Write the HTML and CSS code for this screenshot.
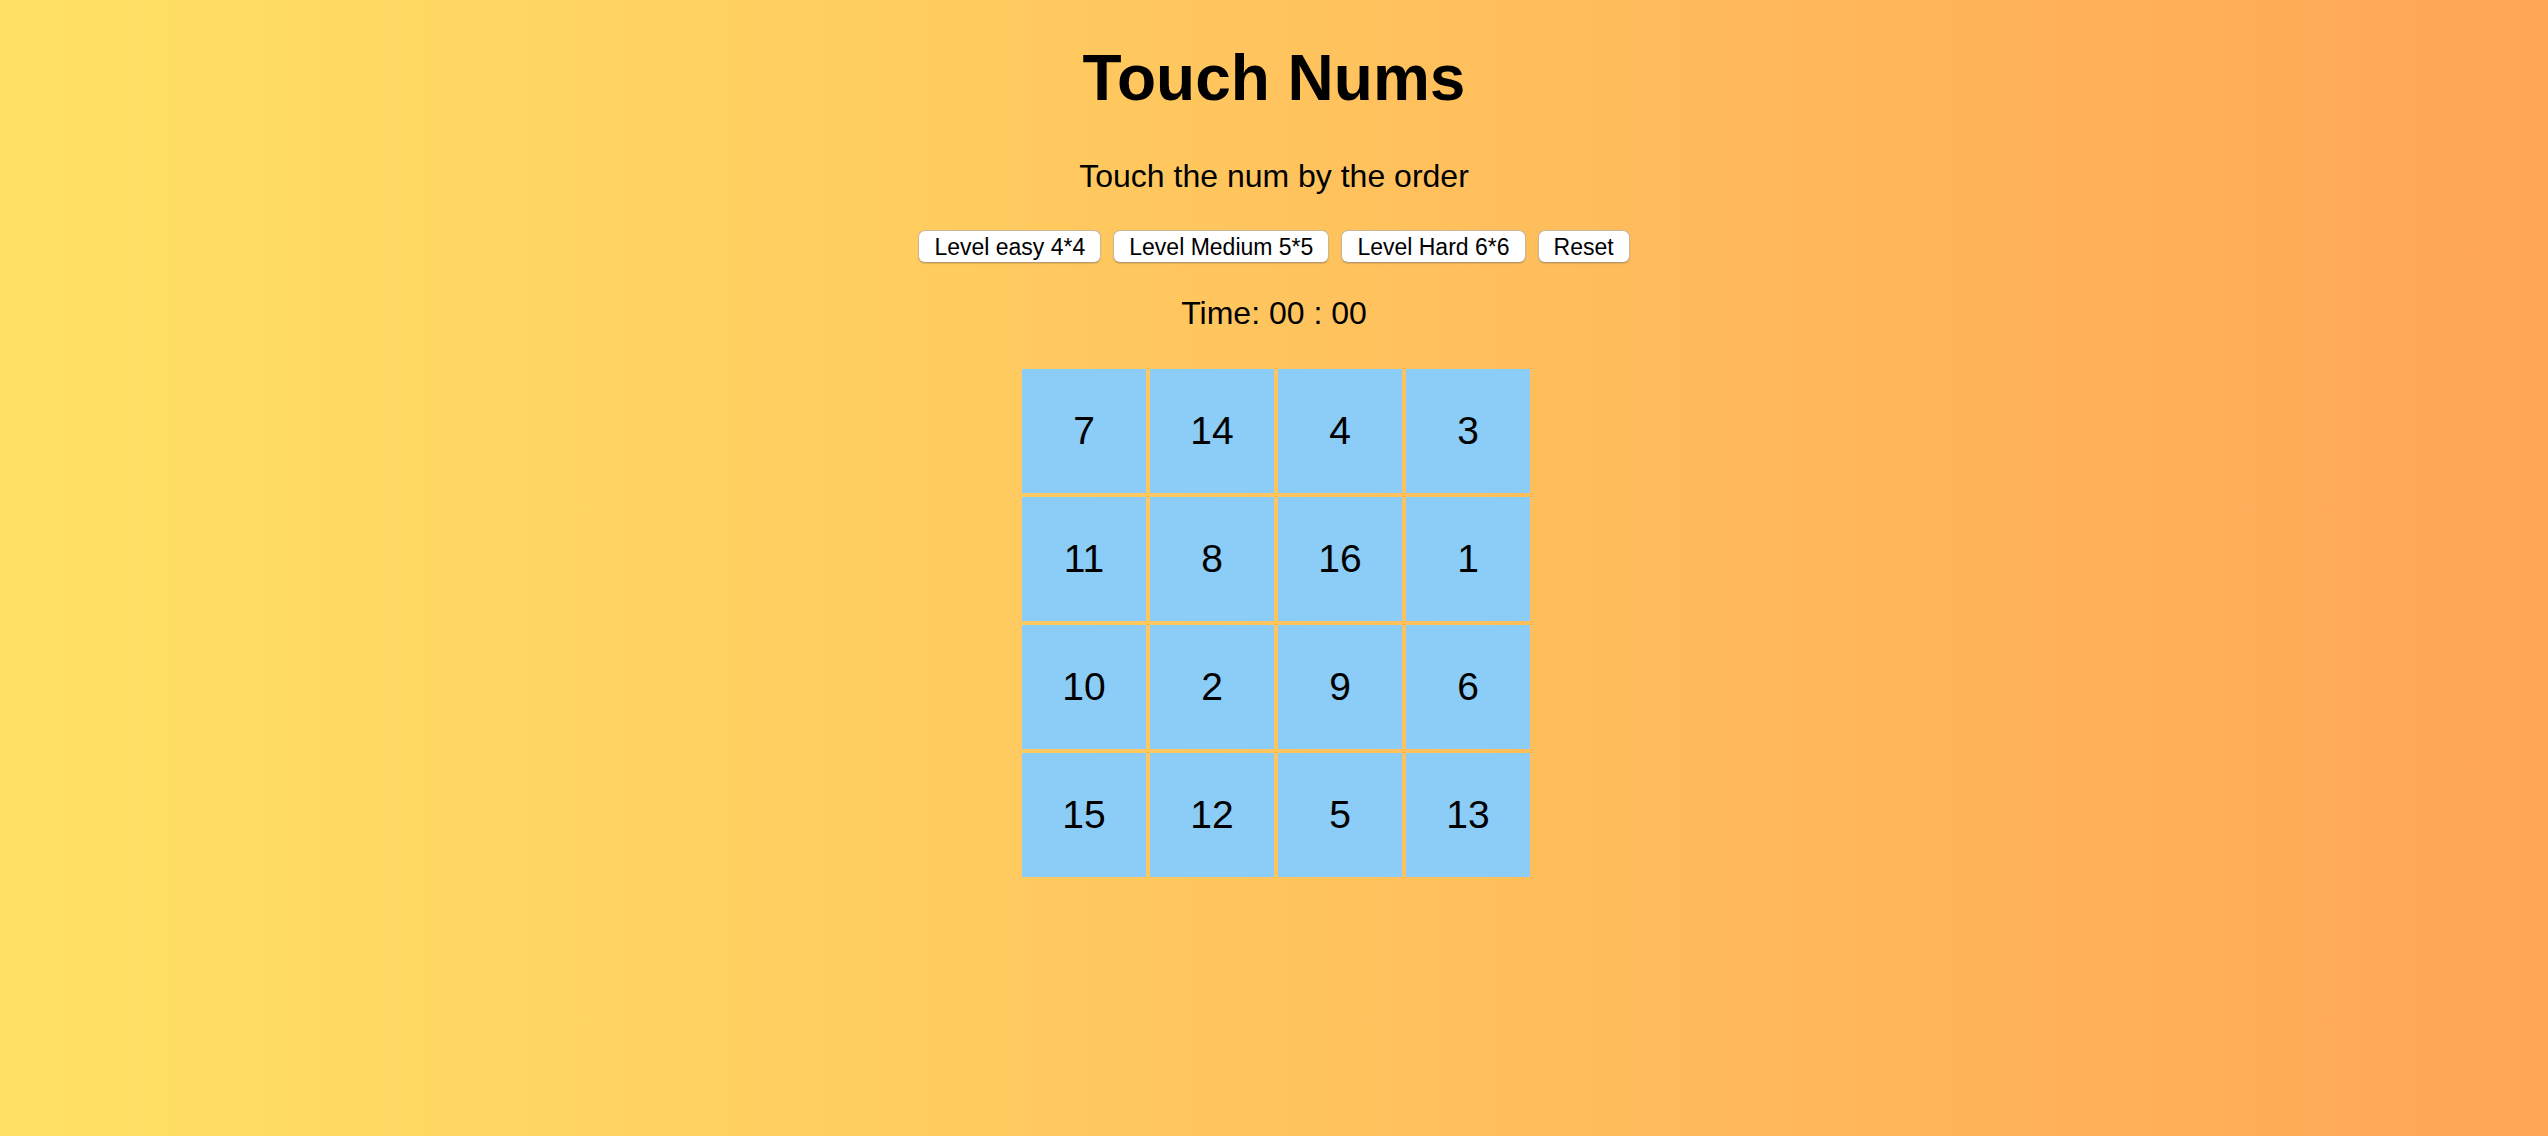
FILE: index.html
```html
<!DOCTYPE html>
<html lang="en">
<head>
<meta charset="utf-8">
<title>Touch Nums</title>
<link rel="stylesheet" href="styles.css">
</head>
<body>
<main class="app">
  <h1 class="title">Touch Nums</h1>
  <p class="subtitle">Touch the num by the order</p>
  <div class="controls">
    <button class="btn">Level easy 4*4</button>
    <button class="btn">Level Medium 5*5</button>
    <button class="btn">Level Hard 6*6</button>
    <button class="btn">Reset</button>
  </div>
  <p class="timer">Time: 00 : 00</p>
  <div class="board">
    <div class="cell">7</div>
    <div class="cell">14</div>
    <div class="cell">4</div>
    <div class="cell">3</div>
    <div class="cell">11</div>
    <div class="cell">8</div>
    <div class="cell">16</div>
    <div class="cell">1</div>
    <div class="cell">10</div>
    <div class="cell">2</div>
    <div class="cell">9</div>
    <div class="cell">6</div>
    <div class="cell">15</div>
    <div class="cell">12</div>
    <div class="cell">5</div>
    <div class="cell">13</div>
  </div>
</main>
</body>
</html>
```
FILE: styles.css
```css
html, body {
  margin: 0;
  padding: 0;
  height: 100%;
}
body {
  background: linear-gradient(to right, #ffe265, #ffa656);
  font-family: "Liberation Sans", Arial, sans-serif;
  color: #000;
}
.app {
  display: flex;
  flex-direction: column;
  align-items: center;
  padding-top: 42px;
}
.title {
  margin: 0;
  font-size: 64px;
  font-weight: bold;
  line-height: 72px;
}
.subtitle {
  margin: 44px 0 0;
  font-size: 32px;
  line-height: 36px;
}
.controls {
  display: flex;
  gap: 12px;
  margin-top: 36px;
}
.btn {
  box-sizing: border-box;
  height: 33px;
  padding: 0 15px;
  font-family: "Liberation Sans", Arial, sans-serif;
  font-size: 23px;
  line-height: 30px;
  color: #000;
  background: #fff;
  border: 1px solid #c9b79a;
  border-bottom-color: #b39a74;
  border-radius: 7px;
  box-shadow: 0 1px 1px rgba(150, 100, 30, 0.25);
}
.timer {
  margin: 32px 0 0;
  font-size: 32px;
  line-height: 36px;
}
.board {
  display: grid;
  grid-template-columns: repeat(4, 124px);
  grid-auto-rows: 124px;
  gap: 4px;
  margin-top: 38px;
  padding-left: 4px;
}
.cell {
  background: #8bcdf6;
  display: flex;
  align-items: center;
  justify-content: center;
  font-size: 39px;
  line-height: 1;
  padding-bottom: 2px;
  box-sizing: border-box;
}
```
